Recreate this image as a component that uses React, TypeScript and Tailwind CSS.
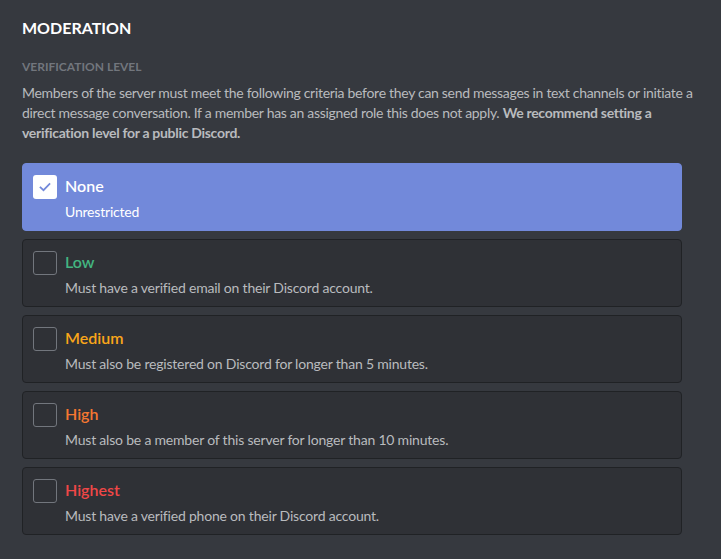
import React from "react";

const levels = [
  { name: "None", desc: "Unrestricted", color: "text-white", checked: true },
  { name: "Low", desc: "Must have a verified email on their Discord account.", color: "text-[#43b581]" },
  { name: "Medium", desc: "Must also be registered on Discord for longer than 5 minutes.", color: "text-[#faa61a]" },
  { name: "High", desc: "Must also be a member of this server for longer than 10 minutes.", color: "text-[#f57731]" },
  { name: "Highest", desc: "Must have a verified phone on their Discord account.", color: "text-[#f04747]" },
];

export default function App() {
  return (
    <div
      className="w-[721px] h-[559px] bg-[#36393f] px-[22px] pt-[17px] overflow-hidden"
      style={{ fontFamily: "Lato, 'Open Sans', sans-serif" }}
    >
      <h1 className="text-[16px] leading-[22px] font-bold text-white uppercase">Moderation</h1>
      <div className="mt-[20px] text-[12px] leading-[16px] font-bold text-[#72767d] uppercase">Verification Level</div>
      <p className="mt-[8px] w-[672px] text-[14px] leading-[20px] tracking-[-0.3px] text-[#b9bbbe]">
        Members of the server must meet the following criteria before they can send messages in text channels or initiate a direct message conversation. If a member has an assigned role this does not apply.{" "}
        <strong className="font-bold">We recommend setting a verification level for a public Discord.</strong>
      </p>
      <div className="mt-[20px] w-[660px] flex flex-col gap-[8px]">
        {levels.map((l) => (
          <div
            key={l.name}
            className={
              l.checked
                ? "h-[68px] rounded-[4px] bg-[#7289da] border border-[#7289da] flex items-start px-[10px] pt-[11px]"
                : "h-[68px] rounded-[4px] bg-[#2f3136] border border-[#202225] flex items-start px-[10px] pt-[11px]"
            }
          >
            {l.checked ? (
              <div className="w-[24px] h-[24px] rounded-[3px] bg-white flex items-center justify-center shrink-0">
                <svg width="16" height="16" viewBox="0 0 16 16">
                  <path d="M3.5 8.5 L6.5 11.2 L12.5 5" fill="none" stroke="#7289da" strokeWidth="1.7" strokeLinecap="square" />
                </svg>
              </div>
            ) : (
              <div className="w-[24px] h-[24px] rounded-[3px] border border-[#72767d] shrink-0" />
            )}
            <div className="ml-[8px]">
              <div className={`text-[16px] leading-[22px] font-semibold ${l.color}`}>{l.name}</div>
              <div className={`mt-[5px] text-[14px] leading-[20px] tracking-[-0.2px] ${l.checked ? "text-white" : "text-[#b9bbbe]"}`}>{l.desc}</div>
            </div>
          </div>
        ))}
      </div>
    </div>
  );
}
